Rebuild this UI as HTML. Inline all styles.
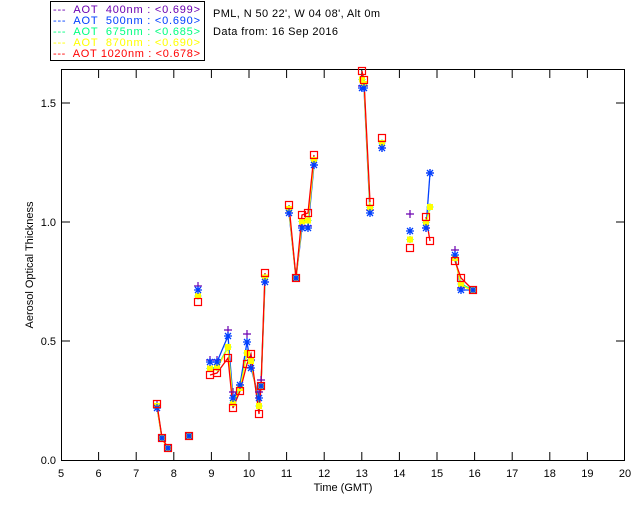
<!DOCTYPE html>
<html><head><style>
body{margin:0;background:#fff;width:640px;height:512px;overflow:hidden}
svg text{font-family:"Liberation Sans",sans-serif;font-size:11px;white-space:pre}
</style></head><body>
<svg width="640" height="512" xmlns="http://www.w3.org/2000/svg" id="s">
<rect x="50.5" y="1.5" width="154" height="59" fill="none" stroke="#000"/>
<g font-size="11">
<text x="53" y="13" fill="#6a00b0" textLength="147" lengthAdjust="spacing">---  AOT  400nm : &lt;0.699&gt;</text>
<text x="53" y="24" fill="#0040ff" textLength="147" lengthAdjust="spacing">---  AOT  500nm : &lt;0.690&gt;</text>
<text x="53" y="35" fill="#00ff80" textLength="147" lengthAdjust="spacing">---  AOT  675nm : &lt;0.685&gt;</text>
<text x="53" y="46" fill="#ffff00" textLength="147" lengthAdjust="spacing">---  AOT  870nm : &lt;0.690&gt;</text>
<text x="53" y="57" fill="#ff0000" textLength="147" lengthAdjust="spacing">---  AOT 1020nm : &lt;0.678&gt;</text>
</g>
<text x="213" y="17" textLength="167" lengthAdjust="spacing">PML, N 50 22', W 04 08', Alt 0m</text>
<text x="213" y="35" textLength="125" lengthAdjust="spacing">Data from: 16 Sep 2016</text>
<rect x="61.5" y="69.5" width="563" height="391" fill="none" stroke="#000"/>
<text x="33" y="265" transform="rotate(-90 33 265)" text-anchor="middle" font-size="10">Aerosol Optical Thickness</text>
<text x="343" y="491" text-anchor="middle" font-size="10">Time (GMT)</text>
<g id="ax" font-size="10"></g>
<g id="d"></g>
</svg>
<script>
var ns="http://www.w3.org/2000/svg",ax=document.getElementById('ax'),d=document.getElementById('d');
function el(t,a,p){var e=document.createElementNS(ns,t);for(var k in a)e.setAttribute(k,a[k]);(p||d).appendChild(e);return e}
for(var h=5;h<=20;h++){var x=61+(h-5)*37.6;
 if(h>5&&h<20){el('line',{x1:x,y1:460,x2:x,y2:452,stroke:'#000'},ax);el('line',{x1:x,y1:70,x2:x,y2:78,stroke:'#000'},ax);}
 var t=el('text',{x:x,y:477,'text-anchor':'middle'},ax);t.textContent=h;}
[[0,'0.0'],[0.5,'0.5'],[1,'1.0'],[1.5,'1.5']].forEach(function(v){var y=460-v[0]*238;
 if(v[0]>0){el('line',{x1:61,y1:y,x2:70,y2:y,stroke:'#000'},ax);el('line',{x1:625,y1:y,x2:616,y2:y,stroke:'#000'},ax);}
 var t=el('text',{x:56,y:y+4,'text-anchor':'end'},ax);t.textContent=v[1];});
var R=[[157,404],[162,438],[168,448],[189,436],[198,302],[210,375],[217,373],[228,358],[233,408],[240,391],[247,364],[251,354],[259,414],[261,386],[265,273],[289,205],[296,278],[302,215],[308,213],[314,155],[362,71],[364,80],[370,202],[382,138],[410,248],[426,217],[430,241],[455,261],[461,278],[473,290]];
var B=[408,438,448,436,290,362,362,336,398,385,342,368,398,386,282,213,278,228,228,165,88,88,213,148,231,228,173,255,290,290];
var P=[404,438,448,436,286,360,360,330,392,385,334,360,392,380,282,213,278,226,226,165,86,86,210,148,214,228,173,250,288,290];
var G=R.map(function(p,i){return (p[1]+B[i])/2});
var groups=[[0,3],[5,15],[15,20],[20,23],[25,27],[27,30]];
function lines(ys,c){groups.forEach(function(g){var pts=[];for(var i=g[0];i<g[1];i++)pts.push(R[i][0]+','+ys[i]);el('polyline',{points:pts.join(' '),fill:'none',stroke:c,'stroke-width':1.3});});}
lines(B,'#0040ff');lines(G,'#00ff80');lines(G.map(function(v,i){return v+1}),'#ffff00');lines(R.map(function(p){return p[1]}),'#ff0000');
R.forEach(function(p,i){var x=p[0];
 el('path',{d:'M'+(x-4)+' '+P[i]+'h8M'+x+' '+(P[i]-4)+'v8',stroke:'#6a00b0','stroke-width':1.2});
 el('path',{d:'M'+x+' '+(G[i]-3)+'l3 3l-3 3l-3 -3z',fill:'none',stroke:'#00ff80'});
 el('rect',{x:x-3,y:G[i]-3,width:6,height:6,fill:'#ffff00'});
 el('path',{d:'M'+(x-4)+' '+B[i]+'h8M'+x+' '+(B[i]-4)+'v8M'+(x-3)+' '+(B[i]-3)+'l6 6M'+(x+3)+' '+(B[i]-3)+'l-6 6',stroke:'#0040ff','stroke-width':1.3});
 el('rect',{x:x-3.5,y:p[1]-3.5,width:7,height:7,fill:'none',stroke:'#ff0000','stroke-width':1.2});
});
</script>
</body></html>
